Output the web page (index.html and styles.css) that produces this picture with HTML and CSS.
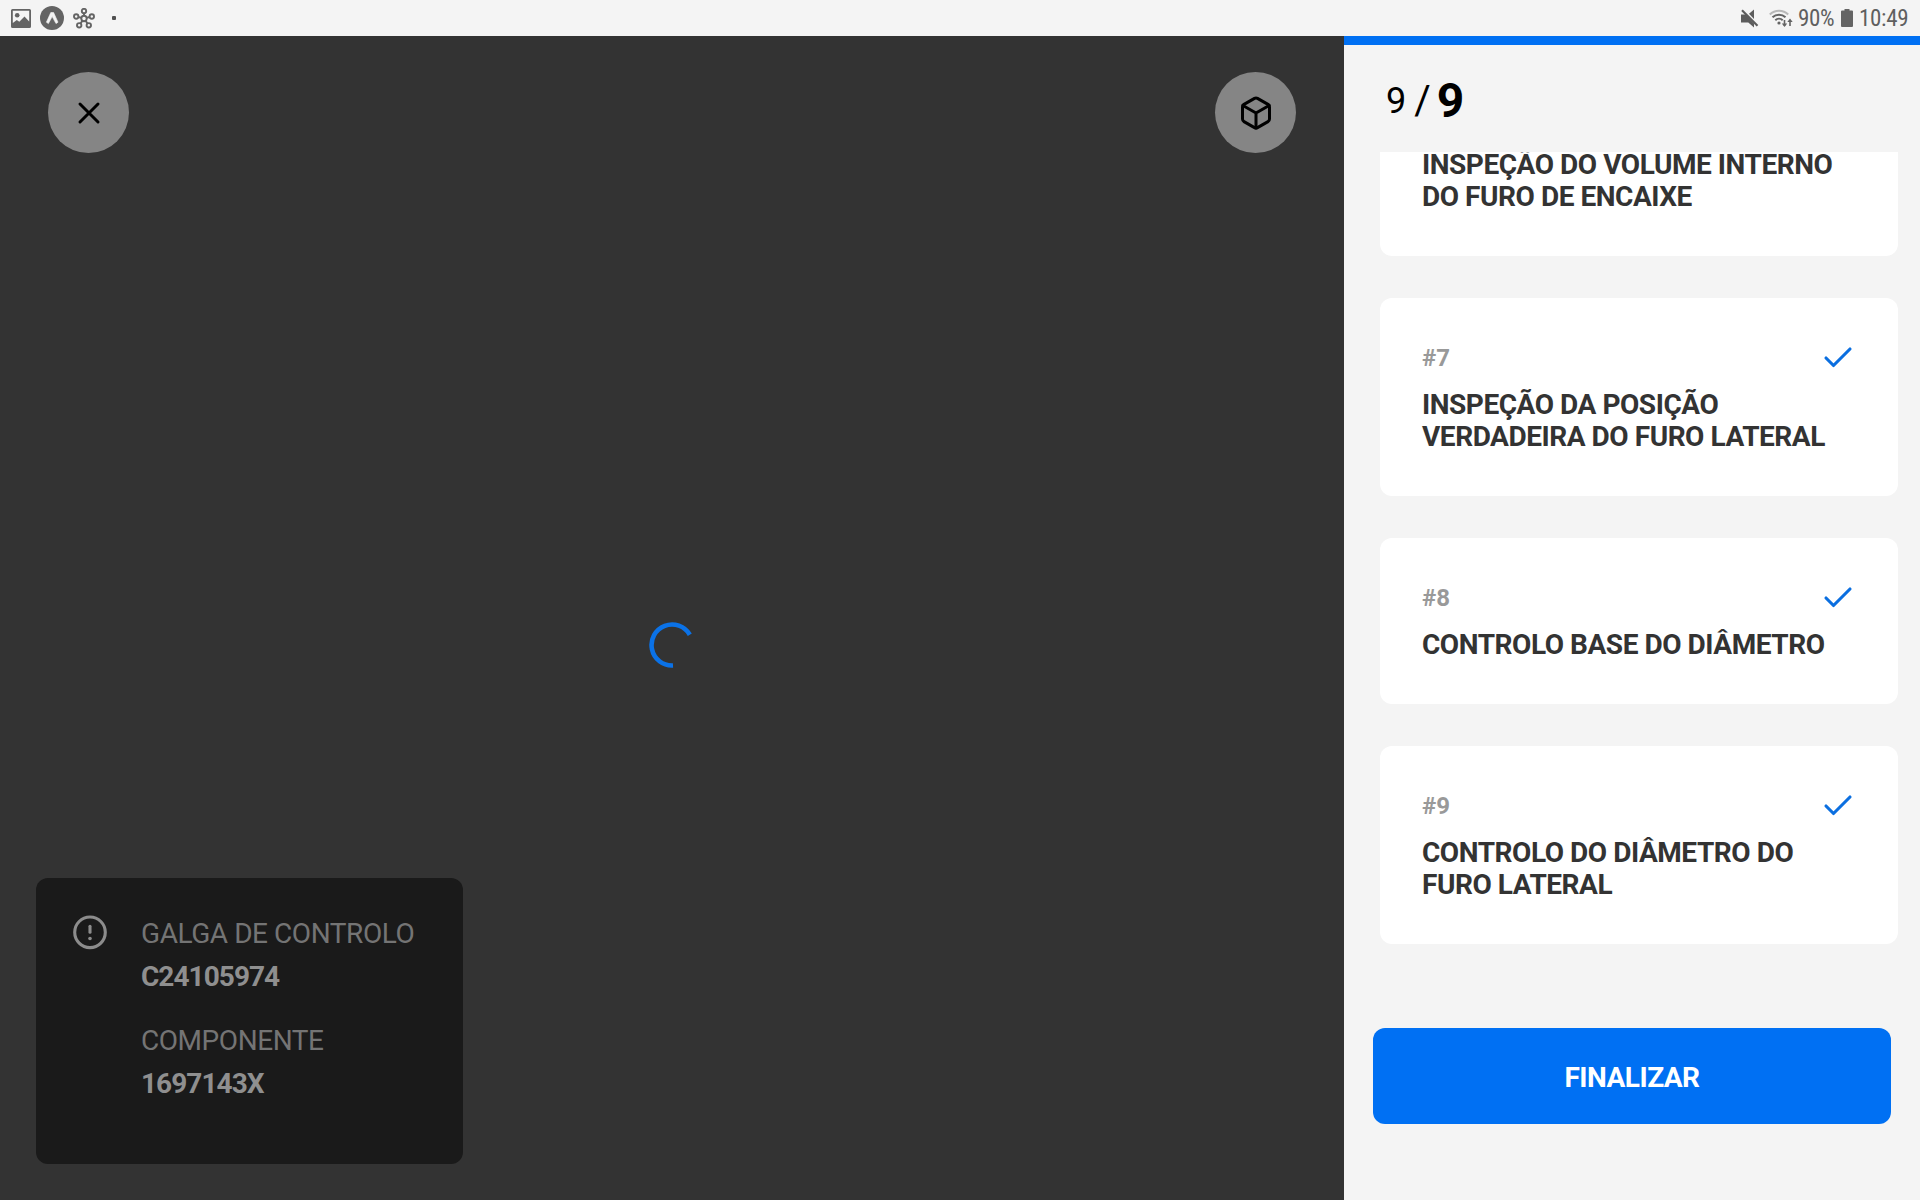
FILE: index.html
```html
<!DOCTYPE html>
<html lang="pt">
<head>
<meta charset="utf-8">
<title>Inspeção</title>
<link rel="stylesheet" href="styles.css">
</head>
<body>
<header class="statusbar">
  <div class="status-left">
    <svg class="ic-image" width="20" height="19" viewBox="0 0 20 19"><path fill="#646464" fill-rule="evenodd" d="M1.500 0h17A1.500 1.500 0 0 1 20 1.500v16a1.500 1.500 0 0 1-1.500 1.500h-17A1.500 1.500 0 0 1 0 17.500v-16A1.500 1.500 0 0 1 1.500 0zM1.800 1.800v12.200l4-3 2.500 1.800 5.200-5.300 4.700 5V1.800z"/><circle cx="6.200" cy="6.200" r="2.300" fill="#646464"/></svg>
    <svg class="ic-expo" width="24" height="24" viewBox="0 0 24 24"><circle cx="12" cy="12" r="12" fill="#646464"/><path d="M10.800 6.500h2.800l4.400 9.700-2 1.400-3.800-7-3.800 7-2-1.400z" fill="#f4f4f4" stroke="#f4f4f4" stroke-width=".6" stroke-linejoin="round"/></svg>
    <svg class="ic-hub" width="22" height="21" viewBox="0 0 22 21" fill="none" stroke="#646464" stroke-width="1.900"><circle cx="11" cy="10.500" r="2.700"/><circle cx="11" cy="3" r="2.200"/><circle cx="3.200" cy="8.500" r="2.200"/><circle cx="18.800" cy="8.500" r="2.200"/><circle cx="6.200" cy="17.300" r="2.200"/><circle cx="15.800" cy="17.300" r="2.200"/><path d="M11 5v3M5.300 9l3.200.8M16.700 9l-3.200.8M7.500 15.500l2-2.900M14.500 15.500l-2-2.900"/></svg>
    <span class="dot"></span>
  </div>
  <div class="status-right">
    <svg class="ic-mute" width="18" height="19" viewBox="0 0 18 19"><path fill="#5c5c5c" d="M0 5.500h4.500l8.500 9v4L7.300 13.500H0zM13 .5v9.500L8 4.800z"/><path d="M1 1.200l15.500 15.500" stroke="#5c5c5c" stroke-width="2.200"/></svg>
    <svg class="ic-wifi" width="24" height="19" viewBox="0 0 24 19" fill="none" stroke-width="2"><path d="M.8 5.500a13 13 0 0 1 18.400 0" stroke="#b8b8b8"/><path d="M3.500 8.300a9.300 9.300 0 0 1 13 0M6.300 11.200a5.300 5.300 0 0 1 7.400 0" stroke="#646464"/><circle cx="10" cy="14" r="1.600" fill="#646464"/><path d="M15.500 11v6M21 17v-6" stroke="#646464" stroke-width="1.600"/><path d="M12.800 14.500h5.400L15.500 18zM18.300 13h5.400L21 9.500z" fill="#646464"/></svg>
    <span class="battery-text">90%</span>
    <svg class="ic-batt" width="12" height="18" viewBox="0 0 12 18"><path fill="#646464" d="M3.500 0h5v1.500H11a1 1 0 0 1 1 1V17a1 1 0 0 1-1 1H1a1 1 0 0 1-1-1V2.500a1 1 0 0 1 1-1h2.500z"/></svg>
    <span class="clock">10:49</span>
  </div>
</header>
<main class="screen">
  <section class="viewer">
    <div class="toolbar">
      <button class="round"><svg width="36" height="36" viewBox="0 0 24 24"><path d="M18 6L6 18M6 6l12 12"/></svg></button>
      <button class="round"><svg width="36" height="36" viewBox="0 0 24 24"><path d="M21 16V8a2 2 0 0 0-1-1.730l-7-4a2 2 0 0 0-2 0l-7 4A2 2 0 0 0 3 8v8a2 2 0 0 0 1 1.730l7 4a2 2 0 0 0 2 0l7-4A2 2 0 0 0 21 16z"/><path d="M3.270 6.960L12 12.010l8.730-5.050M12 22.080V12"/></svg></button>
    </div>
    <svg class="spinner" width="48" height="48" viewBox="-24 -24 48 48"><path d="M1 20.500A20.500 20.500 0 1 1 17.800-10.250" fill="none" stroke="#0b72e7" stroke-width="4.600"/></svg>
    <div class="info">
      <svg class="alert" width="36" height="36" viewBox="0 0 36 36"><circle cx="18" cy="18.300" r="15.300" fill="none" stroke="#8c8c8c" stroke-width="3.100"/><path d="M18 12.300v6" stroke="#8c8c8c" stroke-width="3.100" stroke-linecap="round"/><circle cx="18" cy="24.500" r="1.800" fill="#8c8c8c"/></svg>
      <dl class="details">
        <dt>GALGA DE CONTROLO</dt><dd>C24105974</dd>
        <dt>COMPONENTE</dt><dd>1697143X</dd>
      </dl>
    </div>
  </section>
  <aside class="panel">
    <div class="counter"><span class="current">9</span><span class="slash">/</span><span class="total">9</span></div>
    <div class="list">
      <article class="card">
        <h2>INSPEÇÃO DO VOLUME INTERNO DO FURO DE ENCAIXE</h2>
      </article>
      <article class="card">
        <div class="card-head"><span>#7</span><svg width="36" height="36" viewBox="0 0 24 24"><path d="M20 6L9 17l-5-5"/></svg></div>
        <h2>INSPEÇÃO DA POSIÇÃO VERDADEIRA DO FURO LATERAL</h2>
      </article>
      <article class="card">
        <div class="card-head"><span>#8</span><svg width="36" height="36" viewBox="0 0 24 24"><path d="M20 6L9 17l-5-5"/></svg></div>
        <h2>CONTROLO BASE DO DIÂMETRO</h2>
      </article>
      <article class="card">
        <div class="card-head"><span>#9</span><svg width="36" height="36" viewBox="0 0 24 24"><path d="M20 6L9 17l-5-5"/></svg></div>
        <h2>CONTROLO DO DIÂMETRO DO FURO LATERAL</h2>
      </article>
    </div>
    <button class="finish">FINALIZAR</button>
  </aside>
</main>
</body>
</html>
```
FILE: styles.css
```css
* { box-sizing: border-box; }
body {
  margin: 0;
  width: 1920px;
  height: 1200px;
  overflow: hidden;
  display: flex;
  flex-direction: column;
  font-family: Roboto, "Liberation Sans", sans-serif;
  background: #f4f4f4;
}
svg { display: block; flex: none; }
button { border: 0; padding: 0; font: inherit; }
.statusbar {
  flex: none;
  height: 36px;
  display: flex;
  justify-content: space-between;
  background: #f4f4f4;
  color: #5f5f5f;
}
.status-left, .status-right { display: flex; align-items: center; }
.status-left { padding-left: 11px; }
.ic-expo { margin-left: 9px; }
.ic-hub { margin-left: 9px; }
.dot { width: 4px; height: 4px; margin-left: 17px; border-radius: 1px; background: #505050; }
.status-right { padding-right: 12px; }
.ic-wifi { margin-left: 10px; }
.battery-text, .clock {
  font-family: "Roboto Condensed", Roboto, sans-serif;
  font-size: 23px;
  line-height: 34px;
  padding-top: 2px;
  letter-spacing: -0.3px;
  white-space: nowrap;
}
.battery-text { margin-left: 5px; width: 37px; }
.ic-batt { margin-left: 6px; }
.clock { margin-left: 6px; width: 49px; }
.screen { flex: 1; display: flex; min-height: 0; }
.viewer {
  position: relative;
  width: 1344px;
  padding: 36px;
  display: flex;
  flex-direction: column;
  justify-content: space-between;
  background: #333333;
}
.toolbar { display: flex; justify-content: space-between; padding: 0 12px; }
.round {
  width: 81px;
  height: 81px;
  border-radius: 50%;
  background: #858585;
  display: flex;
  align-items: center;
  justify-content: center;
}
.round svg { fill: none; stroke: #000; stroke-width: 2; stroke-linecap: round; stroke-linejoin: round; }
.spinner { position: absolute; left: 648px; top: 585px; }
.info {
  width: 427px;
  height: 286px;
  padding: 34px 36px;
  display: flex;
  gap: 33px;
  border-radius: 12px;
  background: #1a1a1a;
}
.alert { margin-top: 2px; }
.details { margin: 0; font-size: 28px; line-height: 43px; color: #747474; white-space: nowrap; }
.details dt { height: 43px; letter-spacing: -0.44px; }
.details dd { margin: 0 0 21px; height: 43px; font-weight: 700; letter-spacing: -0.96px; color: #8f8f8f; }
.panel {
  width: 576px;
  border-top: 9px solid #0070f3;
  background: #f4f4f4;
  display: flex;
  flex-direction: column;
}
.counter {
  flex: none;
  height: 107px;
  padding: 4px 0 0 42px;
  display: flex;
  align-items: center;
  color: #000;
  line-height: 1;
}
.current { font-size: 36px; }
.slash { font-size: 40px; margin-left: 8px; }
.total { font-size: 48px; font-weight: 700; margin-left: 6px; }
.list {
  height: 834px;
  padding: 0 22px 42px 36px;
  overflow: hidden;
  display: flex;
  flex-direction: column;
  justify-content: flex-end;
  gap: 42px;
}
.card { flex: none; padding: 42px 42px 43px; border-radius: 12px; background: #fff; }
.card-head {
  display: flex;
  justify-content: space-between;
  align-items: center;
  height: 36px;
  margin-bottom: 13px;
  font-size: 24px;
  font-weight: 700;
  color: #999;
}
.card-head svg { fill: none; stroke: #0b6fe0; stroke-width: 2.1; stroke-linecap: round; stroke-linejoin: round; }
.card h2 { margin: 0 -10px 0 0; font-size: 28px; line-height: 32px; font-weight: 700; letter-spacing: -0.45px; color: #333; }
.finish {
  width: 518px;
  height: 96px;
  margin: 42px 0 0 29px;
  padding-top: 2px;
  border-radius: 12px;
  background: #0070f3;
  color: #fff;
  font-size: 28px;
  font-weight: 700;
  letter-spacing: -0.5px;
}
```
